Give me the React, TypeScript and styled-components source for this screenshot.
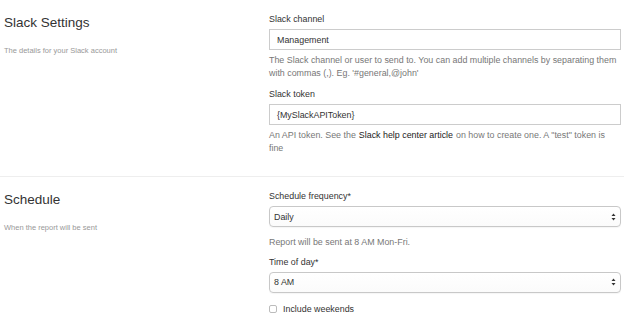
import React from 'react';
import styled, { createGlobalStyle } from 'styled-components';

const GlobalStyle = createGlobalStyle`
    html, body {
        margin: 0;
        padding: 0;
        background: #ffffff;
    }
    body {
        font-family: 'Liberation Sans', Arial, Helvetica, sans-serif;
        color: #333333;
    }
`;

const Page = styled.div`
    width: 624px;
    height: 330px;
    overflow: hidden;
    background: #ffffff;
`;

const Section = styled.section<{ divided?: boolean }>`
    display: grid;
    grid-template-columns: 265px 352px;
    padding: ${(props) => (props.divided ? '13px 0 0 4px' : '13px 0 22px 4px')};
    border-top: ${(props) => (props.divided ? '1px solid #eeeeee' : '0')};
`;

const Intro = styled.div`
    display: flex;
    flex-direction: column;
`;

const Title = styled.h3`
    margin: 2px 0 0 0;
    font-size: 13.5px;
    line-height: 16px;
    font-weight: normal;
    color: #333333;
`;

const Lead = styled.p`
    margin: 15px 0 0 0;
    font-size: 7.5px;
    line-height: 10px;
    color: #999999;
`;

const Fields = styled.div`
    display: flex;
    flex-direction: column;
`;

const Group = styled.div<{ gap?: number }>`
    display: flex;
    flex-direction: column;
    margin-top: ${(props) => props.gap ?? 0}px;
`;

const Label = styled.label`
    font-size: 8.9px;
    line-height: 13px;
    color: #333333;
    margin-bottom: 3px;
`;

const TextInput = styled.div`
    box-sizing: border-box;
    height: 21px;
    border: 1px solid #cccccc;
    padding: 0 7px;
    display: flex;
    align-items: center;
    font-size: 8.9px;
    color: #333333;
    background: #ffffff;
`;

const Select = styled.div`
    box-sizing: border-box;
    height: 21px;
    border: 1px solid #c8c8c8;
    border-radius: 4px;
    padding: 0 4px;
    display: flex;
    align-items: center;
    justify-content: space-between;
    font-size: 8.9px;
    color: #333333;
    background: linear-gradient(#ffffff, #fbfbfb);
    box-shadow: 0 1px 1px rgba(0, 0, 0, 0.04);
`;

const Help = styled.p<{ spaced?: boolean }>`
    margin: ${(props) => (props.spaced ? '9px' : '4px')} 0 0 0;
    padding-right: 2px;
    font-size: 8.9px;
    line-height: 12.5px;
    color: #777777;
`;

const Link = styled.a`
    padding: 0 0.5px;
    color: #222222;
    text-decoration: none;
`;

const CheckRow = styled.label`
    display: flex;
    align-items: center;
    gap: 6px;
    margin-top: 10px;
    font-size: 8.9px;
    line-height: 13px;
    color: #333333;
`;

const Box = styled.span`
    box-sizing: border-box;
    width: 8px;
    height: 8px;
    border: 1px solid #bcbcbc;
    border-radius: 2px;
    background: #ffffff;
`;

const Arrows = () => (
    <svg width="5" height="8" viewBox="0 0 5 8">
        <path d="M2.5 0.5 L4.5 3 L0.5 3 Z" fill="#333" />
        <path d="M2.5 7.5 L4.5 5 L0.5 5 Z" fill="#333" />
    </svg>
);

export default function App() {
    return (
        <Page>
            <GlobalStyle />
            <Section>
                <Intro>
                    <Title>Slack Settings</Title>
                    <Lead>The details for your Slack account</Lead>
                </Intro>
                <Fields>
                    <Group>
                        <Label>Slack channel</Label>
                        <TextInput>Management</TextInput>
                        <Help>
                            The Slack channel or user to send to. You can add multiple channels by separating them
                            with commas (,). Eg. '#general,@john'
                        </Help>
                    </Group>
                    <Group gap={9}>
                        <Label>Slack token</Label>
                        <TextInput>{'{MySlackAPIToken}'}</TextInput>
                        <Help>
                            An API token. See the<Link> Slack help center article </Link>on how to create one. A
                            "test" token is fine
                        </Help>
                    </Group>
                </Fields>
            </Section>
            <Section divided>
                <Intro>
                    <Title>Schedule</Title>
                    <Lead>When the report will be sent</Lead>
                </Intro>
                <Fields>
                    <Group>
                        <Label>Schedule frequency*</Label>
                        <Select>
                            <span>Daily</span>
                            <Arrows />
                        </Select>
                        <Help spaced>Report will be sent at 8 AM Mon-Fri.</Help>
                    </Group>
                    <Group gap={7}>
                        <Label>Time of day*</Label>
                        <Select>
                            <span>8 AM</span>
                            <Arrows />
                        </Select>
                    </Group>
                    <CheckRow>
                        <Box />
                        Include weekends
                    </CheckRow>
                </Fields>
            </Section>
        </Page>
    );
}
